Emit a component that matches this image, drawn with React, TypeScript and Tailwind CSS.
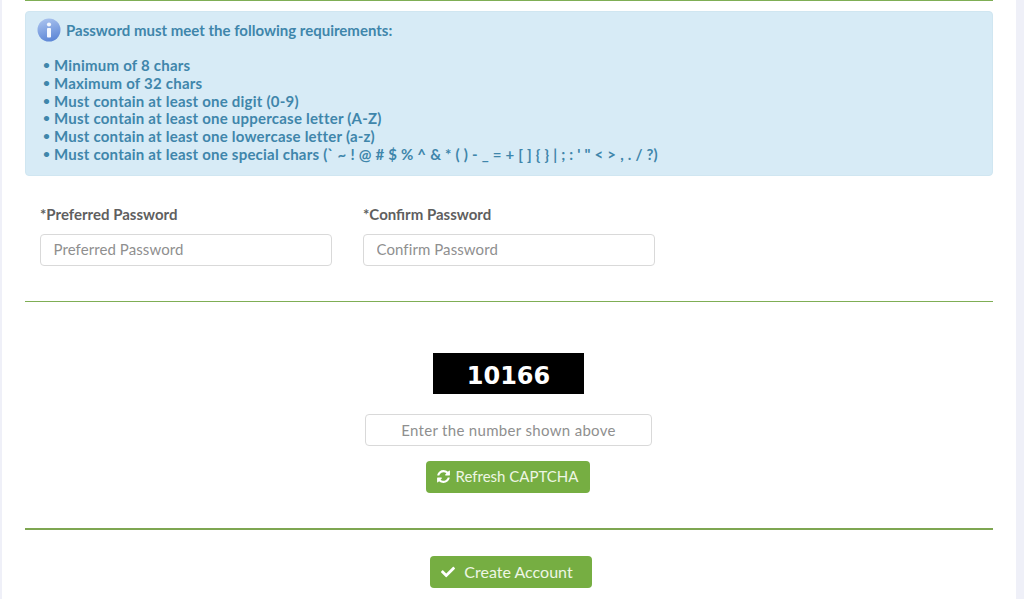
import { FaCheck } from "react-icons/fa";

const items = [
  "Minimum of 8 chars",
  "Maximum of 32 chars",
  "Must contain at least one digit (0-9)",
  "Must contain at least one uppercase letter (A-Z)",
  "Must contain at least one lowercase letter (a-z)",
  "Must contain at least one special chars (` ~ ! @ # $ % ^ & * ( ) - _ = + [ ] { } | ; : ' \" < > , . / ?)",
];

function InfoIcon() {
  return (
    <svg width="24" height="24" viewBox="0 0 24 24" className="shrink-0">
      <defs>
        <linearGradient id="g" x1="0.3" y1="0" x2="0.6" y2="1">
          <stop offset="0%" stopColor="#a9c2ee" />
          <stop offset="100%" stopColor="#5c86d6" />
        </linearGradient>
      </defs>
      <circle cx="12" cy="12" r="11.5" fill="url(#g)" />
      <circle cx="12" cy="6.5" r="2.1" fill="#f4f8ff" />
      <rect x="10" y="10" width="4" height="9.5" rx="0.8" fill="#f4f8ff" />
    </svg>
  );
}

function RefreshIcon() {
  return (
    <svg width="15" height="15" viewBox="0 0 1792 1792" fill="#fff" className="shrink-0">
      <path d="M1639 1056q0 5-1 7-64 268-268 434.5t-478 166.5q-146 0-282.5-55t-243.5-157l-129 129q-19 19-45 19t-45-19-19-45v-448q0-26 19-45t45-19h448q26 0 45 19t19 45-19 45l-137 137q71 66 161 102t187 36q134 0 250-65t186-179q11-17 53-117 8-23 30-23h192q13 0 22.5 9.5t9.5 22.5zm25-800v448q0 26-19 45t-45 19h-448q-26 0-45-19t-19-45 19-45l138-138q-148-137-349-137-134 0-250 65t-186 179q-11 17-53 117-8 23-30 23h-199q-13 0-22.5-9.5t-9.5-22.5v-7q65-268 270-434.5t480-166.5q146 0 284 55.5t245 156.5l130-129q19-19 45-19t45 19 19 45z" />
    </svg>
  );
}

function Field({ label, placeholder }: { label: string; placeholder: string }) {
  return (
    <div className="w-[292px]">
      <div className="text-[15px] leading-[20px] font-bold text-[#5f5f5f]">{label}</div>
      <input
        placeholder={placeholder}
        className="mt-[10px] block h-[32px] w-full rounded-[4px] border border-[#d9d9d9] bg-white px-[12.5px] pb-[2px] text-[15px] tracking-[0.08px] outline-none placeholder:text-[#8f8f8f]"
      />
    </div>
  );
}

export default function App() {
  return (
    <div className="h-[599px] w-[1024px] overflow-hidden bg-[#eff0f8] pl-[2px] pr-[8px] font-['Lato','Liberation_Sans',sans-serif]">
      <div className="h-full bg-white px-[23px]">
        <div className="h-px bg-[#7fae55]" />
        <div className="mt-[10px] h-[165px] rounded-[4px] border border-[#d0e6f1] bg-[#d7ebf6] pl-[11px] pt-[6px] text-[15px] font-bold text-[#3f86ab]">
          <div className="flex items-center gap-[5px]">
            <InfoIcon />
            <span>Password must meet the following requirements:</span>
          </div>
          <ul className="mt-[14px] pl-[6px]">
            {items.map((t) => (
              <li key={t} className="flex h-[17.8px] items-center leading-[18px]">
                <span className="w-[11px] shrink-0 text-[12px]">•</span>
                <span className="whitespace-pre tracking-[0.22px]">{t}</span>
              </li>
            ))}
          </ul>
        </div>

        <div className="mt-[28px] flex gap-[31px] pl-[15px]">
          <Field label="*Preferred Password" placeholder="Preferred Password" />
          <Field label="*Confirm Password" placeholder="Confirm Password" />
        </div>

        <div className="mt-[35px] h-px bg-[#7fae55]" />

        <div className="flex flex-col items-center pr-[1px]">
          <div className="mt-[51px] flex h-[41px] w-[151px] items-center justify-center bg-black pt-[4px] font-['DejaVu_Sans',sans-serif] text-[24px] font-bold text-white">
            10166
          </div>
          <input
            placeholder="Enter the number shown above"
            className="mt-[20px] block h-[32px] w-[287px] rounded-[4px] border border-[#d9d9d9] bg-white pb-[1px] text-center text-[15px] tracking-[0.32px] outline-none placeholder:text-[#8f8f8f]"
          />
          <button className="mt-[15px] mr-[1px] flex h-[32px] w-[164px] items-center justify-center gap-[5px] rounded-[4px] bg-[#76ae42] pb-[1px] pr-[2px] text-[15px] text-[#eef6e4]">
            <RefreshIcon />
            Refresh CAPTCHA
          </button>
        </div>

        <div className="mt-[35px] h-[2px] bg-[#7ea651]" />

        <div className="flex justify-center pl-[3px]">
          <button className="mt-[26px] flex h-[32px] w-[162px] items-center justify-center gap-[9px] rounded-[4px] bg-[#76ae42] pb-[1px] pr-[7px] text-[16px] text-[#eef6e4]">
            <FaCheck className="text-[14px] text-white" />
            Create Account
          </button>
        </div>
      </div>
    </div>
  );
}
